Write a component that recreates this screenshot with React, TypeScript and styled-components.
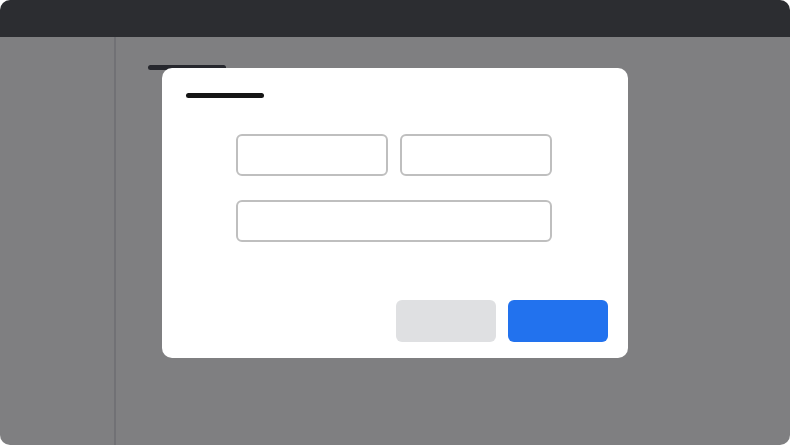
import React from 'react'
import styled, { createGlobalStyle } from 'styled-components'

const Global = createGlobalStyle`
	html, body {
		margin: 0;
		padding: 0;
		background: #ffffff;
		font-family: Inter, 'Liberation Sans', sans-serif;
	}
`

const Window = styled.div`
	position: relative;
	width: 790px;
	height: 445px;
	border-radius: 10px;
	overflow: hidden;
	display: flex;
	flex-direction: column;
	background: #ffffff;
`

const TopBar = styled.header`
	height: 37px;
	flex: none;
	background: #2c2d31;
`

const Body = styled.div`
	position: relative;
	flex: 1;
	display: flex;
`

const Sidebar = styled.aside`
	width: 114px;
	flex: none;
	border-right: 2px solid #e2e2e6;
	background: #ffffff;
`

const Main = styled.main`
	flex: 1;
	padding: 28px 32px;
`

const Bar = styled.div<{ $w: number; $h: number; $color: string }>`
	width: ${p => p.$w}px;
	height: ${p => p.$h}px;
	border-radius: ${p => p.$h}px;
	background: ${p => p.$color};
`

// dims everything under the top bar while the dialog is open
const Overlay = styled.div`
	position: absolute;
	inset: 0;
	background: rgba(0, 0, 4, 0.5);
	display: flex;
	justify-content: center;
	align-items: flex-start;
	padding-top: 31px;
`

const Dialog = styled.section`
	width: 466px;
	box-sizing: border-box;
	padding: 25px 20px 16px 24px;
	background: #ffffff;
	border-radius: 10px;
	display: flex;
	flex-direction: column;
`

const Form = styled.div`
	width: 316px;
	margin: 36px 0 0 50px;
	display: grid;
	grid-template-columns: 1fr 1fr;
	column-gap: 12px;
	row-gap: 24px;
`

const Field = styled.div<{ $wide?: boolean }>`
	grid-column: ${p => (p.$wide ? '1 / -1' : 'auto')};
	height: 42px;
	box-sizing: border-box;
	border: 2px solid #bfbfbf;
	border-radius: 6px;
	background: #ffffff;
`

const Footer = styled.footer`
	display: flex;
	justify-content: flex-end;
	gap: 12px;
	margin-top: 58px;
`

const Button = styled.button<{ $primary?: boolean }>`
	width: 100px;
	height: 42px;
	border: none;
	border-radius: 6px;
	background: ${p => (p.$primary ? '#2272ee' : '#dfe0e2')};
	cursor: pointer;
`

export default function App() {
	return (
		<>
			<Global />
			<Window>
				<TopBar />
				<Body>
					<Sidebar />
					<Main>
						<Bar $w={78} $h={5} $color="#4c4e56" />
					</Main>
					<Overlay>
						<Dialog role="dialog">
							<Bar $w={78} $h={5} $color="#151515" />
							<Form>
								<Field />
								<Field />
								<Field $wide />
							</Form>
							<Footer>
								<Button />
								<Button $primary />
							</Footer>
						</Dialog>
					</Overlay>
				</Body>
			</Window>
		</>
	)
}
